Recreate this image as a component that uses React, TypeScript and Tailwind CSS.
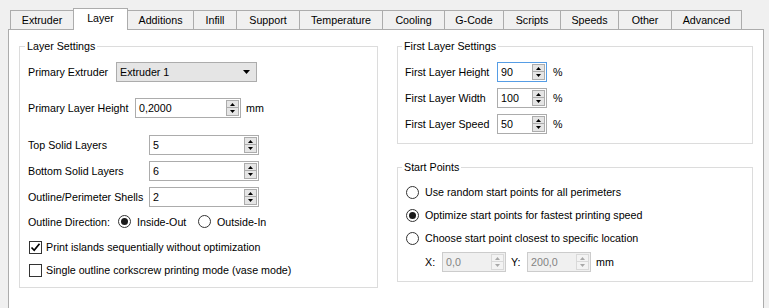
import React from "react";

const tabs: { label: string; w: string; selected?: boolean }[] = [
  { label: "Extruder", w: "w-[64px]" },
  { label: "Layer", w: "w-[55px]", selected: true },
  { label: "Additions", w: "w-[67px]" },
  { label: "Infill", w: "w-[44px]" },
  { label: "Support", w: "w-[64px]" },
  { label: "Temperature", w: "w-[84px]" },
  { label: "Cooling", w: "w-[63px]" },
  { label: "G-Code", w: "w-[60px]" },
  { label: "Scripts", w: "w-[58px]" },
  { label: "Speeds", w: "w-[59px]" },
  { label: "Other", w: "w-[54px]" },
  { label: "Advanced", w: "w-[71px]" },
];

function Tri({ up, color, w = 5, h = 3 }: { up: boolean; color: string; w?: number; h?: number }) {
  return (
    <svg width={w} height={h} viewBox={`0 0 ${w} ${h}`} className="block">
      <path d={up ? `M${w / 2} 0 L${w} ${h} L0 ${h}Z` : `M0 0 L${w} 0 L${w / 2} ${h}Z`} fill={color} />
    </svg>
  );
}

function SpinButtons({ disabled = false }: { disabled?: boolean }) {
  const box = disabled
    ? "border-[#d9d9d9] bg-[#f3f3f3]"
    : "border-[#acacac] bg-[#e5e5e5]";
  const c = disabled ? "#a8a8a8" : "#000000";
  return (
    <div className="mr-[1px] flex h-[16px] w-[13px] flex-col">
      <div className={`flex h-[8px] items-center justify-center border ${box}`}>
        <Tri up color={c} />
      </div>
      <div className={`flex h-[8px] items-center justify-center border border-t-0 ${box}`}>
        <Tri up={false} color={c} />
      </div>
    </div>
  );
}

function Spin({
  width,
  value,
  focused = false,
  disabled = false,
}: {
  width: string;
  value: string;
  focused?: boolean;
  disabled?: boolean;
}) {
  const border = focused
    ? "border-[#569de5]"
    : disabled
    ? "border-[#cccccc]"
    : "border-[#acacac]";
  const bg = disabled ? "bg-[#f0f0f0] text-[#838383]" : "bg-white text-black";
  return (
    <div className={`flex h-[20px] items-center border ${border} ${bg} ${width}`}>
      <span className="flex-1 pl-[3px]">{value}</span>
      <SpinButtons disabled={disabled} />
    </div>
  );
}

function Radio({ checked }: { checked: boolean }) {
  return (
    <div className="flex h-[13px] w-[13px] items-center justify-center rounded-full border border-[#333333] bg-white">
      {checked && <div className="h-[7px] w-[7px] rounded-full bg-[#1a1a1a]" />}
    </div>
  );
}

function Check({ checked }: { checked: boolean }) {
  return (
    <div className="flex h-[13px] w-[13px] items-center justify-center border border-[#333333] bg-white">
      {checked && (
        <svg width="11" height="11" viewBox="0 0 11 11" className="block">
          <path d="M1.5 5.5 L4.2 8.3 L9.5 1.8" stroke="#000" strokeWidth="1.7" fill="none" />
        </svg>
      )}
    </div>
  );
}

export default function App() {
  return (
    <div className="h-[308px] w-[769px] overflow-hidden bg-[#f0f0f0] font-['Liberation_Sans',Arial,sans-serif] text-[10.7px] text-black">
      {/* Tab bar */}
      <div className="flex h-[29px] items-end pl-[10px]">
        {tabs.map((t, i) =>
          t.selected ? (
            <div
              key={t.label}
              className={`relative z-10 -mb-px flex h-[22px] items-center justify-center border border-b-0 border-[#acacac] bg-white pb-[2px] ${t.w} ${i > 0 ? "-ml-px" : ""}`}
            >
              {t.label}
            </div>
          ) : (
            <div
              key={t.label}
              className={`flex h-[19px] items-center justify-center border border-b-0 border-[#acacac] bg-[#f0f0f0] ${t.w} ${i > 0 ? "-ml-px" : ""}`}
            >
              {t.label}
            </div>
          )
        )}
      </div>

      {/* Pane */}
      <div className="ml-[8px] flex h-[300px] w-[756px] items-start gap-[19px] border border-[#acacac] bg-white pl-[10px] pt-[9px]">
        {/* Layer Settings */}
        <fieldset className="w-[359px] min-w-0 border border-[#dcdcdc] p-0">
          <legend className="ml-[5px] px-[2px] leading-[14px]">Layer Settings</legend>
          <div className="flex flex-col pb-[7px] pl-[8px]">
            <div className="mt-[9px] flex h-[20px] items-center">
              <span className="w-[88px]">Primary Extruder</span>
              <div className="flex h-[20px] w-[141px] items-center justify-between border border-[#acacac] bg-[#e5e5e5] pl-[3px] pr-[6px]">
                <span>Extruder 1</span>
                <Tri up={false} color="#000" w={7} h={4} />
              </div>
            </div>
            <div className="mt-[16px] flex h-[20px] items-center">
              <span className="w-[107px]">Primary Layer Height</span>
              <Spin width="w-[106px]" value="0,2000" />
              <span className="ml-[5px]">mm</span>
            </div>
            <div className="mt-[17px] flex h-[20px] items-center">
              <span className="w-[121px]">Top Solid Layers</span>
              <Spin width="w-[110px]" value="5" />
            </div>
            <div className="mt-[6px] flex h-[20px] items-center">
              <span className="w-[121px]">Bottom Solid Layers</span>
              <Spin width="w-[110px]" value="6" />
            </div>
            <div className="mt-[6px] flex h-[20px] items-center">
              <span className="w-[121px]">Outline/Perimeter Shells</span>
              <Spin width="w-[110px]" value="2" />
            </div>
            <div className="mt-[5px] flex h-[20px] items-center">
              <span className="w-[90px]">Outline Direction:</span>
              <div className="flex w-[80px] items-center">
                <Radio checked />
                <span className="ml-[6px]">Inside-Out</span>
              </div>
              <div className="flex items-center">
                <Radio checked={false} />
                <span className="ml-[6px]">Outside-In</span>
              </div>
            </div>
            <div className="mt-[5px] flex h-[20px] items-center pl-[1px]">
              <Check checked />
              <span className="ml-[4px]">Print islands sequentially without optimization</span>
            </div>
            <div className="mt-[3px] flex h-[20px] items-center pl-[1px]">
              <Check checked={false} />
              <span className="ml-[4px]">Single outline corkscrew printing mode (vase mode)</span>
            </div>
          </div>
        </fieldset>

        {/* Right column */}
        <div className="flex w-[356px] flex-col">
          <fieldset className="min-w-0 border border-[#dcdcdc] p-0">
            <legend className="ml-[4px] px-[2px] leading-[14px]">First Layer Settings</legend>
            <div className="flex flex-col pb-[9px] pl-[7px]">
              <div className="mt-[9px] flex h-[20px] items-center">
                <span className="w-[92px]">First Layer Height</span>
                <Spin width="w-[50px]" value="90" focused />
                <span className="ml-[6px]">%</span>
              </div>
              <div className="mt-[6px] flex h-[20px] items-center">
                <span className="w-[92px]">First Layer Width</span>
                <Spin width="w-[50px]" value="100" />
                <span className="ml-[6px]">%</span>
              </div>
              <div className="mt-[6px] flex h-[20px] items-center">
                <span className="w-[92px]">First Layer Speed</span>
                <Spin width="w-[50px]" value="50" />
                <span className="ml-[6px]">%</span>
              </div>
            </div>
          </fieldset>

          <fieldset className="mt-[16px] min-w-0 border border-[#dcdcdc] p-0">
            <legend className="ml-[4px] px-[2px] leading-[14px]">Start Points</legend>
            <div className="flex flex-col pb-[9px] pl-[8px]">
              <div className="mt-[8px] flex h-[20px] items-center">
                <Radio checked={false} />
                <span className="ml-[6px]">Use random start points for all perimeters</span>
              </div>
              <div className="mt-[3px] flex h-[20px] items-center">
                <Radio checked />
                <span className="ml-[6px]">Optimize start points for fastest printing speed</span>
              </div>
              <div className="mt-[3px] flex h-[20px] items-center">
                <Radio checked={false} />
                <span className="ml-[6px]">Choose start point closest to specific location</span>
              </div>
              <div className="mt-[4px] flex h-[20px] items-center pl-[19px]">
                <span className="w-[17px]">X:</span>
                <Spin width="w-[64px]" value="0,0" disabled />
                <span className="ml-[5px] w-[16px]">Y:</span>
                <Spin width="w-[64px]" value="200,0" disabled />
                <span className="ml-[5px]">mm</span>
              </div>
            </div>
          </fieldset>
        </div>
      </div>
    </div>
  );
}
